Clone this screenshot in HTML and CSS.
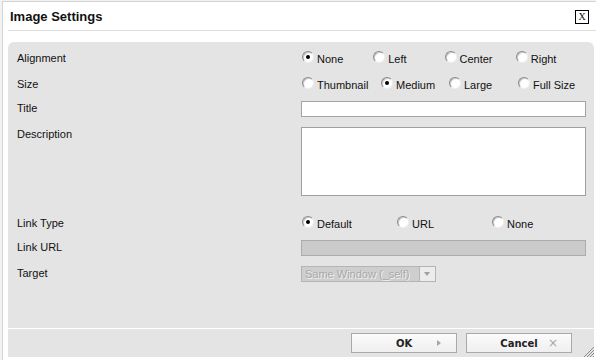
FILE: index.html
```html
<!DOCTYPE html>
<html lang="en">
<head>
    <meta charset="UTF-8">
    <meta name="viewport" content="width=device-width, initial-scale=1.0">
    <title>Image Settings</title>
    <link rel="stylesheet" href="styles.css">
</head>
<body>
    <div class="dialog">
        <div class="header">
            <span class="title">Image Settings</span>
            <span class="close">X</span>
        </div>

        <div class="panel">
            <div class="form">
                <label class="lbl">Alignment</label>
                <div class="ctrl opts opts-align">
                    <label class="opt"><input type="radio" name="align" checked>None</label>
                    <label class="opt"><input type="radio" name="align">Left</label>
                    <label class="opt"><input type="radio" name="align">Center</label>
                    <label class="opt"><input type="radio" name="align">Right</label>
                </div>

                <label class="lbl">Size</label>
                <div class="ctrl opts opts-size">
                    <label class="opt"><input type="radio" name="size">Thumbnail</label>
                    <label class="opt"><input type="radio" name="size" checked>Medium</label>
                    <label class="opt"><input type="radio" name="size">Large</label>
                    <label class="opt"><input type="radio" name="size">Full Size</label>
                </div>

                <label class="lbl" for="inpTitle">Title</label>
                <div class="ctrl">
                    <input type="text" id="inpTitle" class="txt">
                </div>

                <label class="lbl" for="inpDesc">Description</label>
                <div class="ctrl">
                    <textarea id="inpDesc" class="area"></textarea>
                </div>

                <label class="lbl">Link Type</label>
                <div class="ctrl opts opts-link">
                    <label class="opt"><input type="radio" name="link" checked>Default</label>
                    <label class="opt"><input type="radio" name="link">URL</label>
                    <label class="opt"><input type="radio" name="link">None</label>
                </div>

                <label class="lbl" for="inpUrl">Link URL</label>
                <div class="ctrl">
                    <input type="text" id="inpUrl" class="txt" disabled>
                </div>

                <label class="lbl">Target</label>
                <div class="ctrl">
                    <div class="select">
                        <span class="select-text">Same Window (_self)</span>
                        <span class="select-arrow"></span>
                    </div>
                </div>
            </div>
        </div>

        <div class="footer">
            <button class="btn"><span></span><span class="btn-text">OK</span><span class="ico-arrow"></span></button>
            <button class="btn"><span></span><span class="btn-text">Cancel</span><span class="ico-x">&times;</span></button>
        </div>

        <svg class="grip" width="12" height="12" viewBox="0 0 12 12">
            <path d="M11 1 L1 11 M11 4 L4 11 M11 7 L7 11 M11 10 L10 11" stroke="#8a8a8a" stroke-width="1"/>
        </svg>
    </div>
</body>
</html>
```

FILE: styles.css
```css
html, body {
    margin: 0;
    padding: 0;
    font-family: "Liberation Sans", Arial, Helvetica, sans-serif;
    font-size: 11px;
    color: #111;
}
body {
    background: #f2f2f2;
    width: 596px;
    height: 360px;
    overflow: hidden;
}
.dialog {
    position: relative;
    margin: 1px 0 0 2px;
    height: 359px;
    box-sizing: border-box;
    background: #fff;
    border-left: 1px solid #d4d4d4;
    border-top: 1px solid #d4d4d4;
}

/* header */
.header {
    display: flex;
    align-items: center;
    justify-content: space-between;
    height: 29px;
    margin-left: 5px;
    padding: 1px 7px 0 2px;
    box-sizing: border-box;
    border-bottom: 1px solid #dcdcdc;
}
.title {
    font-size: 13px;
    font-weight: bold;
    color: #111;
}
.close {
    width: 12px;
    height: 12px;
    border: 1px solid #000;
    font-family: "Liberation Serif", "Times New Roman", serif;
    font-size: 10px;
    line-height: 12px;
    text-align: center;
    margin-top: 1px;
}

/* main panel */
.panel {
    margin: 11px 2px 0 5px;
    height: 286px;
    box-sizing: border-box;
    padding: 8px 8px 0 9px;
    background: #e4e4e4;
    border-radius: 6px 6px 0 0;
}
.form {
    display: grid;
    grid-template-columns: 284px 285px;
    grid-template-rows: 26px 24px 26px 89px 24px 26px auto;
}
.lbl {
    line-height: 16px;
}
.ctrl {
    padding-top: 1px;
}

/* radio rows */
.opts {
    display: grid;
    line-height: 17px;
}
.opts-align {
    grid-template-columns: repeat(4, 1fr);
}
.opts-size {
    grid-template-columns: 79px 68px 69px 1fr;
}
.opts-link {
    grid-template-columns: repeat(3, 1fr);
}
.opt {
    display: flex;
    align-items: flex-start;
    white-space: nowrap;
}
.opt input {
    -webkit-appearance: none;
    appearance: none;
    position: relative;
    width: 12px;
    height: 12px;
    margin: 0 3px 0 1px;
    border-radius: 50%;
    border: 1px solid;
    border-color: #8c8c8c #f0f0f0 #f0f0f0 #8c8c8c;
    background: radial-gradient(circle at 60% 60%, #fff 55%, #e6e6e6 100%);
    box-shadow: inset 1px 1px 0 #c8c8c8;
    box-sizing: border-box;
}
.opt input:checked::after {
    content: "";
    position: absolute;
    top: 3px;
    left: 3px;
    width: 4px;
    height: 4px;
    border-radius: 50%;
    background: #000;
}

/* text fields */
.txt {
    display: block;
    width: 285px;
    height: 16px;
    margin: 0;
    padding: 0 2px;
    box-sizing: border-box;
    border: 1px solid #a4a4a4;
    background: #fff;
    font: inherit;
}
.txt:disabled {
    background: #cbcbcb;
    border-color: #acacac;
}
.area {
    display: block;
    width: 285px;
    height: 69px;
    margin: 0;
    box-sizing: border-box;
    border: 1px solid #a0a0a0;
    background: #fff;
    resize: none;
    font: inherit;
}

/* disabled select */
.select {
    display: flex;
    width: 135px;
    height: 16px;
    box-sizing: border-box;
    border: 1px solid #b4b4b4;
    background: #cecece;
}
.select-text {
    flex: 1;
    padding-left: 3px;
    line-height: 14px;
    color: #a9a9a9;
    text-shadow: 1px 1px 0 #f2f2f2;
}
.select-arrow {
    width: 15px;
    border-left: 1px solid #b4b4b4;
    background: #ececec;
    position: relative;
}
.select-arrow::after {
    content: "";
    position: absolute;
    top: 5px;
    left: 4px;
    border-left: 3px solid transparent;
    border-right: 3px solid transparent;
    border-top: 4px solid #a0a0a0;
}

/* footer */
.footer {
    display: flex;
    justify-content: flex-end;
    gap: 9px;
    height: 28px;
    box-sizing: border-box;
    margin: 1px 2px 0 5px;
    padding: 4px 22px 0 0;
    background: #e4e4e4;
}
.btn {
    display: grid;
    grid-template-columns: 1fr auto 1fr;
    align-items: center;
    width: 106px;
    height: 20px;
    margin: 0;
    padding: 0 13px 0 0;
    border: 1px solid #a9a9a9;
    background: linear-gradient(#fbfbfb, #efefef);
    font-family: "DejaVu Sans", Tahoma, sans-serif;
    font-size: 10px;
    font-weight: bold;
    color: #222;
}
.btn-text {
    padding-left: 13px;
}
.ico-arrow {
    justify-self: end;
    width: 0;
    height: 0;
    margin-right: 2px;
    border-top: 3px solid transparent;
    border-bottom: 3px solid transparent;
    border-left: 4px solid #a6a6a6;
}
.ico-x {
    justify-self: end;
    font-weight: normal;
    font-size: 12px;
    line-height: 10px;
    color: #a6a6a6;
}

.grip {
    position: absolute;
    right: 1px;
    bottom: 2px;
}
```
